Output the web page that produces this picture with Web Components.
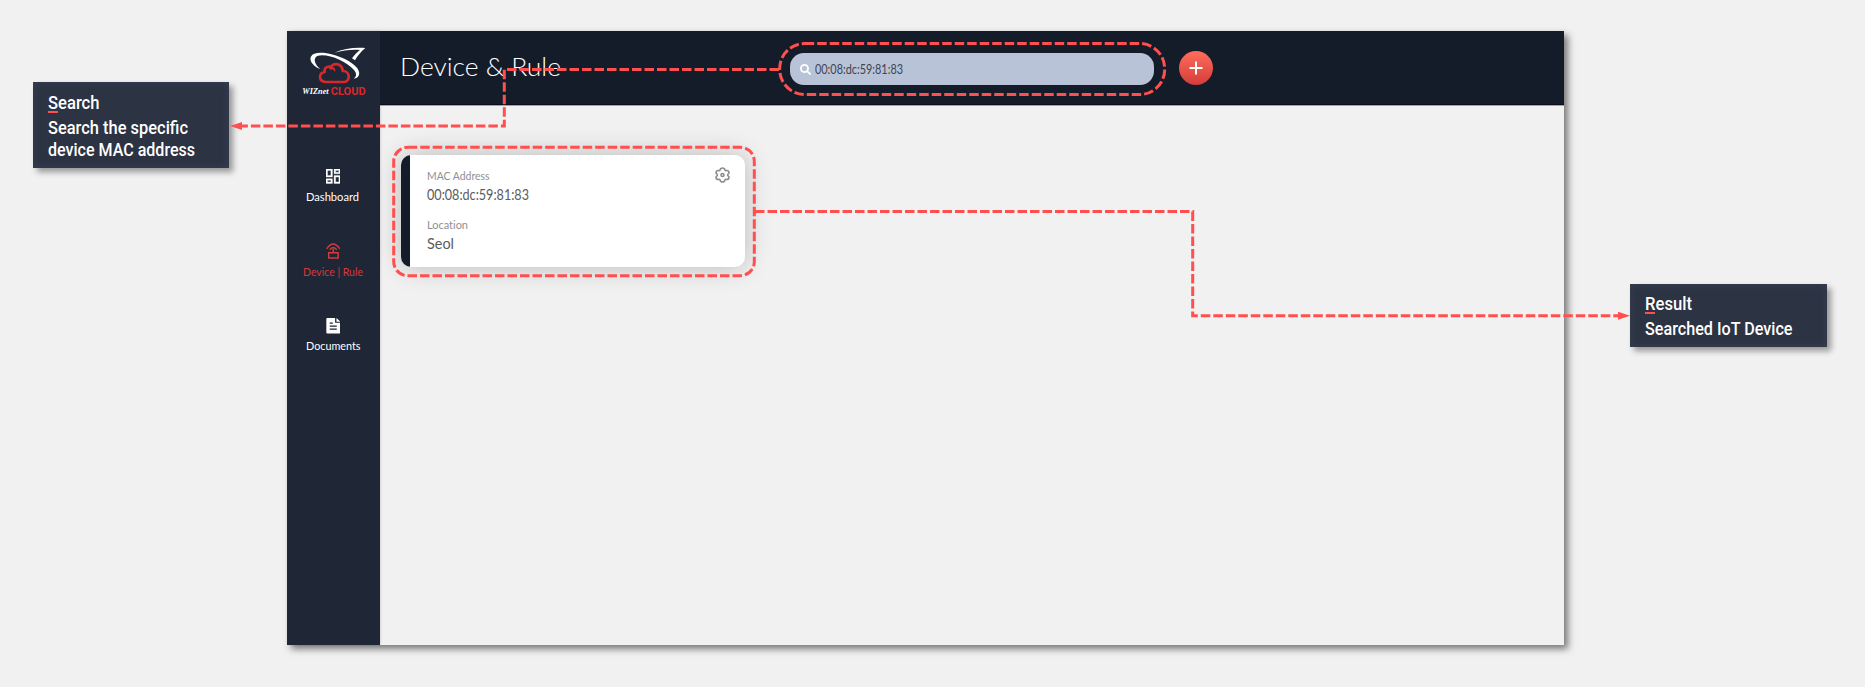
<!DOCTYPE html>
<html lang="en">
<head>
<meta charset="utf-8">
<title>Device &amp; Rule</title>
<style>
html,body{margin:0;height:100%;background:#f1f1f1;overflow:hidden}
body{font-family:Lato,"Liberation Sans",sans-serif;font-variant-ligatures:none}
</style>
</head>
<body>
<guide-page></guide-page>
<script>
const define = (name, html, init) => {
  const t = document.createElement('template');
  t.innerHTML = html;
  customElements.define(name, class extends HTMLElement {
    constructor() {
      super();
      this.attachShadow({mode: 'open'}).append(t.content.cloneNode(true));
    }
    connectedCallback() { if (init) init(this, this.shadowRoot); }
  });
};

/* One line of text scaled to a given width (attribute w). */
define('fit-text', `<style>
:host{display:block;white-space:nowrap}
span{display:inline-block;transform-origin:0 50%}
</style><span><slot></slot></span>`, (el, root) => {
  const w = +el.getAttribute('w');
  el.style.width = w + 'px';
  const s = root.querySelector('span');
  s.style.transform = 'none';
  const now = s.getBoundingClientRect().width;
  if (now) s.style.transform = `scaleX(${w / now})`;
});

define('cloud-logo', `<style>:host{display:block;width:70px;height:55px}svg{display:block}</style>
<svg width="70" height="55" viewBox="60 55 210 165">
<path fill="#fff" d="M121 133C91 121 82 96 103 87C135 76 210 101 233 132C243 148 236 160 221 162C231 155 230 146 222 136C199 108 138 84 112 94C98 101 104 120 121 133Z"/>
<path fill="#fff" d="M163 84C190 72 225 67 256 70C243 81 232 94 225 107L216 101C223 91 231 82 240 76C215 74 190 77 163 84Z"/>
<path fill="none" stroke="#d9272e" stroke-width="8" stroke-linejoin="round" stroke-linecap="round" d="M137 172C114 170 116 145 134 142C131 128 147 121 157 130M151 131C156 113 186 113 188 139C212 138 211 172 192 172H137"/>
<path fill="none" stroke="#d9272e" stroke-width="5" stroke-linecap="round" d="M156 129Q163 131 164 137"/>
<text x="67" y="207" font-family="Liberation Serif,serif" font-style="italic" font-weight="700" font-size="24" fill="#fff" textLength="79" lengthAdjust="spacingAndGlyphs">WIZnet</text>
<text x="152" y="211" font-family="Roboto,sans-serif" font-weight="700" font-size="30" fill="#d9272e" textLength="105" lengthAdjust="spacingAndGlyphs">CLOUD</text>
</svg>`);

define('nav-item', `<style>
:host{display:flex;flex-direction:column;align-items:center;gap:5.5px;height:74.5px;box-sizing:border-box;color:#fff;font-size:11px;line-height:14px}
:host([active]){color:#d53a3c}
.i{height:16px;display:flex;align-items:center}
</style><div class="i"><slot name="icon"></slot></div><slot></slot>`);

define('side-bar', `<style>
:host{display:flex;flex-direction:column;width:93px;flex:none;background:#1f2635;box-shadow:1px 0 2px rgba(0,0,0,.12)}
cloud-logo{margin:12px 0 0 13px}
nav{margin:70.6px 1.5px 0 0}
svg{display:block}
</style>
<cloud-logo></cloud-logo>
<nav>
<nav-item><svg slot="icon" width="14.5" height="14.5" viewBox="3 3 18 18" fill="currentColor"><path d="M19 5v2h-4V5h4M9 5v6H5V5h4m10 8v6h-4v-6h4M9 17v2H5v-2h4M21 3h-8v6h8V3zM11 3H3v10h8V3zm10 8h-8v10h8V11zm-10 4H3v6h8v-6z" stroke="currentColor" stroke-width=".4"/></svg><fit-text w="53">Dashboard</fit-text></nav-item>
<nav-item active><svg slot="icon" width="14.5" height="16" viewBox="0 0 43 47" fill="none" stroke="currentColor" stroke-width="4.4"><path d="M2 17Q21 -12 41 17M11 20Q21 6 32 20M21.5 17V29M8 29H36V44H8Z"/></svg><fit-text w="60">Device | Rule</fit-text></nav-item>
<nav-item><svg slot="icon" width="14.5" height="16" viewBox="0 0 43 47"><path fill="#fff" d="M4 0H27V14H43V43Q43 46 40 46H4Q1 46 1 43V3Q1 0 4 0ZM31 0L43 11H31Z"/><path stroke="#1f2635" stroke-width="3.6" d="M11 15H20M11 24H32M11 33H32"/></svg><fit-text w="54.5">Documents</fit-text></nav-item>
</nav>`);

define('search-field', `<style>
:host{display:flex;align-items:center;box-sizing:border-box;width:364px;height:32px;border-radius:14px;background:#b8c3d8;padding-left:10.5px;gap:3.5px;color:#40444e;font-size:13px;line-height:18px}
svg{display:block}
</style>
<svg width="11" height="11" viewBox="0 0 512 512"><path fill="#fff" d="M505 442.7L405.3 343c-4.5-4.5-10.6-7-17-7H372c27.6-35.3 44-79.7 44-128C416 93.1 322.9 0 208 0S0 93.1 0 208s93.1 208 208 208c48.3 0 92.7-16.4 128-44v16.3c0 6.4 2.5 12.5 7 17l99.7 99.7c9.4 9.4 24.6 9.4 33.9 0l28.3-28.3c9.4-9.4 9.4-24.6.1-34zM208 336c-70.7 0-128-57.2-128-128 0-70.7 57.2-128 128-128 70.7 0 128 57.2 128 128 0 70.7-57.2 128-128 128z"/></svg>
<slot></slot>`);

define('add-button', `<style>
:host{display:flex;align-items:center;justify-content:center;width:34px;height:34px;border-radius:50%;background:linear-gradient(#ff6d5a,#d43c3a)}
</style><svg width="14" height="14" viewBox="0 0 14 14"><path stroke="#fff" stroke-width="2" d="M7 .5V13.5M.5 7H13.5"/></svg>`);

define('top-bar', `<style>
:host{display:flex;align-items:flex-start;box-sizing:border-box;height:74px;padding-left:20px;background:#151c29;border-bottom:1px solid #0a0e1c;box-shadow:0 1px 0 #a3a2ab;color:#fff}
.t{font-size:25px;line-height:30px;font-weight:300;margin:20px 228.5px 0 0}
search-field{margin-top:22px}
add-button{margin:20.4px 0 0 25.5px}
</style>
<fit-text class="t" w="161">Device &amp; Rule</fit-text>
<search-field><fit-text w="88">00:08:dc:59:81:83</fit-text></search-field>
<add-button></add-button>`);

define('device-card', `<style>
:host{display:flex;box-sizing:border-box;width:344px;height:112px;border-radius:10px;overflow:hidden;background:#fff;box-shadow:0 0 26px rgba(0,0,0,.24)}
.bar{width:8.5px;background:#151c29}
.b{flex:1;padding:14px 0 0 17px}
.l{font-size:11px;line-height:14px;color:#909090}
.v{font-size:14.5px;line-height:20px;color:#5c5c5c;margin-top:2px}
.l+.v+.l{margin-top:13.5px}
svg{display:block;margin:12px 15px 0 0}
</style>
<div class="bar"></div>
<div class="b">
<fit-text class="l" w="62.5">MAC Address</fit-text><fit-text class="v" w="102">00:08:dc:59:81:83</fit-text>
<fit-text class="l" w="41">Location</fit-text><fit-text class="v" w="27">Seol</fit-text>
</div>
<svg width="15" height="16" viewBox="0 0 45 48" fill="none" stroke="#8d8d8d" stroke-width="4.8" stroke-linejoin="round"><path d="M17 5Q22.5 1 28 5L30 9.5Q31 11.5 35 10.5Q41 10 42 17Q42 19 39 21.5Q37 24 39 26.5Q42 29 42 31Q41 38 35 37.5Q31 36.5 30 38.500L28 43Q22.5 47 17 43L15 38.5Q14 36.5 10 37.5Q4 38 3 31Q3 29 6 26.5Q8 24 6 21.5Q3 19 3 17Q4 10 10 10.5Q14 11.5 15 9.5Z"/><circle cx="22.5" cy="24" r="4.5"/></svg>`);

define('app-window', `<style>
:host{display:flex;width:1277px;height:614px;background:#f1f1f1;box-shadow:4px 4px 7px rgba(0,0,0,.5)}
main{flex:1;min-width:0}
device-card{margin:49.5px 0 0 21.3px}
</style>
<side-bar></side-bar><main><top-bar></top-bar><device-card></device-card></main>`);

define('callout-note', `<style>
:host{display:block;box-sizing:border-box;padding:10.4px 0 0 15px;background:#2c3343;box-shadow:4px 4px 6px rgba(0,0,0,.38),inset 0 0 10px rgba(68,78,98,.5);color:#fff;font:500 18px/22px Roboto,sans-serif}
.h{position:relative;height:25px}
.h::after{content:"";position:absolute;left:0;top:19px;width:10px;height:2px;background:#ff4f4f}
</style><div class="h"><slot name="title"></slot></div><slot></slot>`);

/* Dashed frames and connector arrows drawn over the window. */
define('guide-lines', `<style>:host{position:absolute;left:0;top:0;pointer-events:none}svg{display:block}</style>
<svg width="1865" height="687" viewBox="0 0 1865 687">
<g fill="none" stroke="#ff4f4f" stroke-width="3" stroke-dasharray="9.5 3">
<rect x="779.7" y="43.5" width="385" height="51" rx="25"/>
<rect x="393.7" y="147.3" width="360.6" height="128.4" rx="14"/>
<path d="M779 69.5H504.3V125.9H241"/>
<path d="M755 211.6H1192.7V315.8H1619"/>
</g>
<path fill="#ff4f4f" d="M230 126L242 122V130ZM1630 315.8L1618 311.8V319.8Z"/>
</svg>`);

define('guide-page', `<style>
:host{display:flex;align-items:flex-start;position:relative;width:1865px;height:687px;overflow:hidden}
.a{width:196px;height:86px;margin:82px 58px 0 33px}
app-window{margin-top:31px}
.b{width:197px;height:63px;margin:284px 0 0 66px;padding-top:9.4px}
</style>
<callout-note class="a"><fit-text slot="title" w="51.5">Search</fit-text><fit-text w="140">Search the specific</fit-text><fit-text w="147">device MAC address</fit-text></callout-note>
<app-window></app-window>
<callout-note class="b"><fit-text slot="title" w="47">Result</fit-text><fit-text w="147.5">Searched IoT Device</fit-text></callout-note>
<guide-lines></guide-lines>`);
</script>
</body>
</html>
